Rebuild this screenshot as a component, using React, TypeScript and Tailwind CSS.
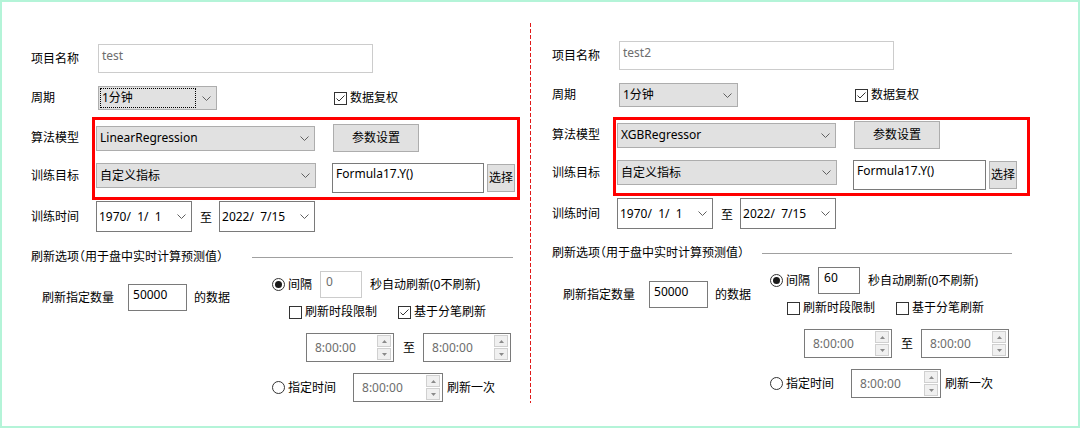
import type { ReactNode } from "react";

function Chevron() {
  return (
    <svg width="9" height="5" viewBox="0 0 9 5" className="shrink-0">
      <path d="M0.5 0.5 L4.5 4.5 L8.5 0.5" fill="none" stroke="#606060" strokeWidth="1" />
    </svg>
  );
}

function ComboBox({ value, className, focused }: { value: string; className: string; focused?: boolean }) {
  return (
    <div className={`flex items-center justify-between border border-[#adadad] bg-[#e1e1e1] pr-[5px] ${className}`}>
      {focused ? (
        <span className="ml-px flex h-[calc(100%-2px)] w-[96px] items-center border border-dotted border-black pl-[1px]">
          {value}
        </span>
      ) : (
        <span className="pl-[3px]">{value}</span>
      )}
      <Chevron />
    </div>
  );
}

function DatePicker({ value }: { value: string }) {
  return (
    <div className="flex h-[31px] w-[96px] items-center justify-between border border-[#7a7a7a] bg-white pr-[5px]">
      <span className="whitespace-pre pl-[2px]">{value}</span>
      <Chevron />
    </div>
  );
}

function Button({ children, className }: { children: ReactNode; className: string }) {
  return (
    <div className={`flex items-center justify-center border border-[#adadad] bg-[#e1e1e1] ${className}`}>
      {children}
    </div>
  );
}

function TextBox({ value, className }: { value: string; className: string }) {
  return <div className={`border bg-white ${className}`}>{value}</div>;
}

function CheckBox({ checked, label, className = "" }: { checked: boolean; label: string; className?: string }) {
  return (
    <div className={`flex items-center gap-[3px] ${className}`}>
      <span className="flex h-[13px] w-[13px] items-center justify-center border border-[#333333] bg-white">
        {checked ? (
          <svg width="11" height="11" viewBox="0 0 11 11">
            <path d="M1.5 5.5 L4 8 L9.5 2.5" fill="none" stroke="#333333" strokeWidth="1" />
          </svg>
        ) : null}
      </span>
      <span>{label}</span>
    </div>
  );
}

function Radio({ checked, label }: { checked: boolean; label: string }) {
  return (
    <div className="flex items-center gap-[3px]">
      <span className="flex h-[13px] w-[13px] items-center justify-center rounded-full border border-[#333333] bg-white">
        {checked ? <span className="h-[7px] w-[7px] rounded-full bg-[#1a1a1a]" /> : null}
      </span>
      <span>{label}</span>
    </div>
  );
}

function SpinBox({ className }: { className: string }) {
  return (
    <div className={`flex h-[29px] items-center justify-between border border-[#7a7a7a] bg-white pr-[2px] ${className}`}>
      <span className="pl-[8px] text-[#6d6d6d]">8:00:00</span>
      <div className="flex flex-col gap-px">
        <span className="flex h-[12px] w-[14px] items-center justify-center border border-[#d0d0d0] bg-[#f0f0f0]">
          <svg width="5" height="3" viewBox="0 0 5 3">
            <path d="M0 3 L2.5 0 L5 3 Z" fill="#8a8a8a" />
          </svg>
        </span>
        <span className="flex h-[12px] w-[14px] items-center justify-center border border-[#d0d0d0] bg-[#f0f0f0]">
          <svg width="5" height="3" viewBox="0 0 5 3">
            <path d="M0 0 L5 0 L2.5 3 Z" fill="#8a8a8a" />
          </svg>
        </span>
      </div>
    </div>
  );
}

interface PanelConfig {
  pad: string;
  width: string;
  name: string;
  model: string;
  focused: boolean;
  redBox: string;
  formulaWidth: string;
  headerTop: string;
  headerText: string;
  lineBox: string;
  leftCol: string;
  interval: string;
  intervalBox: string;
  byTick: boolean;
}

const PANELS: PanelConfig[] = [
  {
    pad: "pt-[42px] pl-[29px]",
    width: "w-[528px]",
    name: "test",
    model: "LinearRegression",
    focused: true,
    redBox: "-top-[7px] h-[83px] w-[428px]",
    formulaWidth: "w-[152px]",
    headerTop: "mt-[17px]",
    headerText: "w-[221px]",
    lineBox: "w-[261px]",
    leftCol: "w-[241px] pt-[13px]",
    interval: "0",
    intervalBox: "border-[#cccccc] text-[#6d6d6d]",
    byTick: true,
  },
  {
    pad: "pt-[39px] pl-[21px]",
    width: "flex-1",
    name: "test2",
    model: "XGBRegressor",
    focused: false,
    redBox: "-top-[4px] h-[79px] w-[417px]",
    formulaWidth: "w-[133px]",
    headerTop: "mt-[16px]",
    headerText: "w-[210px]",
    lineBox: "w-[250px]",
    leftCol: "w-[218px] pt-[14px]",
    interval: "60",
    intervalBox: "border-[#7a7a7a] text-black",
    byTick: false,
  },
];

function Panel({ cfg }: { cfg: PanelConfig }) {
  return (
    <div className={`flex flex-col ${cfg.pad} ${cfg.width}`}>
      <div className="flex h-[29px] items-center">
        <span className="w-[67px]">项目名称</span>
        <TextBox value={cfg.name} className="h-[29px] w-[275px] border-[#cccccc] pl-[3px] pt-[3px] text-[#6d6d6d]" />
      </div>

      <div className="mt-[13px] flex h-[24px] items-center">
        <span className="w-[67px]">周期</span>
        <ComboBox value="1分钟" focused={cfg.focused} className="h-[24px] w-[119px]" />
        <CheckBox checked label="数据复权" className="ml-[117px]" />
      </div>

      <div className="relative mt-[14px]">
        <div className={`pointer-events-none absolute left-[61px] border-[3px] border-[#ff0000] ${cfg.redBox}`} />
        <div className="flex h-[28px] items-center">
          <span className="w-[65px]">算法模型</span>
          <ComboBox value={cfg.model} className="h-[25px] w-[219px]" />
          <Button className="ml-[18px] h-[28px] w-[86px]">参数设置</Button>
        </div>
        <div className="mt-[11px] flex items-start">
          <span className="flex h-[25px] w-[65px] items-center">训练目标</span>
          <ComboBox value="自定义指标" className="h-[25px] w-[220px]" />
          <TextBox
            value="Formula17.Y()"
            className={`ml-[16px] h-[30px] border-[#7a7a7a] pl-[3px] pt-[2px] ${cfg.formulaWidth}`}
          />
          <Button className="ml-[3px] mt-px h-[28px] w-[28px]">选择</Button>
        </div>
      </div>

      <div className="mt-[8px] flex h-[31px] items-center">
        <span className="w-[65px]">训练时间</span>
        <DatePicker value="1970/  1/  1" />
        <span className="ml-[8px] mr-[7px] pt-[3px]">至</span>
        <DatePicker value="2022/  7/15" />
      </div>

      <div className={`flex h-[16px] items-center ${cfg.headerTop}`}>
        <span className={`shrink-0 whitespace-nowrap [font-feature-settings:'halt'] ${cfg.headerText}`}>
          刷新选项（用于盘中实时计算预测值）
        </span>
        <span className={`h-px bg-[#a0a0a0] ${cfg.lineBox}`} />
      </div>

      <div className="mt-[6px] flex items-start">
        <div className={`flex items-center pl-[11px] ${cfg.leftCol}`}>
          <span>刷新指定数量</span>
          <TextBox value="50000" className="ml-[14px] h-[27px] w-[59px] border-[#7a7a7a] pl-[4px] pt-[2px]" />
          <span className="ml-[7px]">的数据</span>
        </div>

        <div className="flex flex-col">
          <div className="flex h-[27px] items-center">
            <Radio checked label="间隔" />
            <TextBox value={cfg.interval} className={`ml-[8px] h-[27px] w-[42px] pl-[5px] pt-[2px] ${cfg.intervalBox}`} />
            <span className="ml-[8px]">秒自动刷新(0不刷新)</span>
          </div>
          <div className="mt-[6px] flex h-[16px] items-center pl-[17px]">
            <CheckBox checked={false} label="刷新时段限制" />
            <CheckBox checked={cfg.byTick} label="基于分笔刷新" className="ml-[21px]" />
          </div>
          <div className="mt-[13px] flex items-center pl-[34px]">
            <SpinBox className="w-[88px]" />
            <span className="ml-[9px] mr-[8px]">至</span>
            <SpinBox className="w-[88px]" />
          </div>
          <div className="mt-[11px] flex h-[29px] items-center">
            <Radio checked={false} label="指定时间" />
            <SpinBox className="ml-[17px] w-[90px]" />
            <span className="ml-[4px]">刷新一次</span>
          </div>
        </div>
      </div>
    </div>
  );
}

export default function App() {
  return (
    <div className="flex h-[428px] w-[1080px] border-2 border-[#b4f4d8] bg-white font-['Noto_Sans','Noto_Sans_CJK_SC',sans-serif] text-[12px] leading-[16px] text-black">
      <Panel cfg={PANELS[0]} />
      <div className="mt-[21px] h-[380px] w-px shrink-0 self-start bg-[repeating-linear-gradient(to_bottom,#e01a1a_0px,#e01a1a_4px,transparent_4px,transparent_6px)]" />
      <Panel cfg={PANELS[1]} />
    </div>
  );
}
